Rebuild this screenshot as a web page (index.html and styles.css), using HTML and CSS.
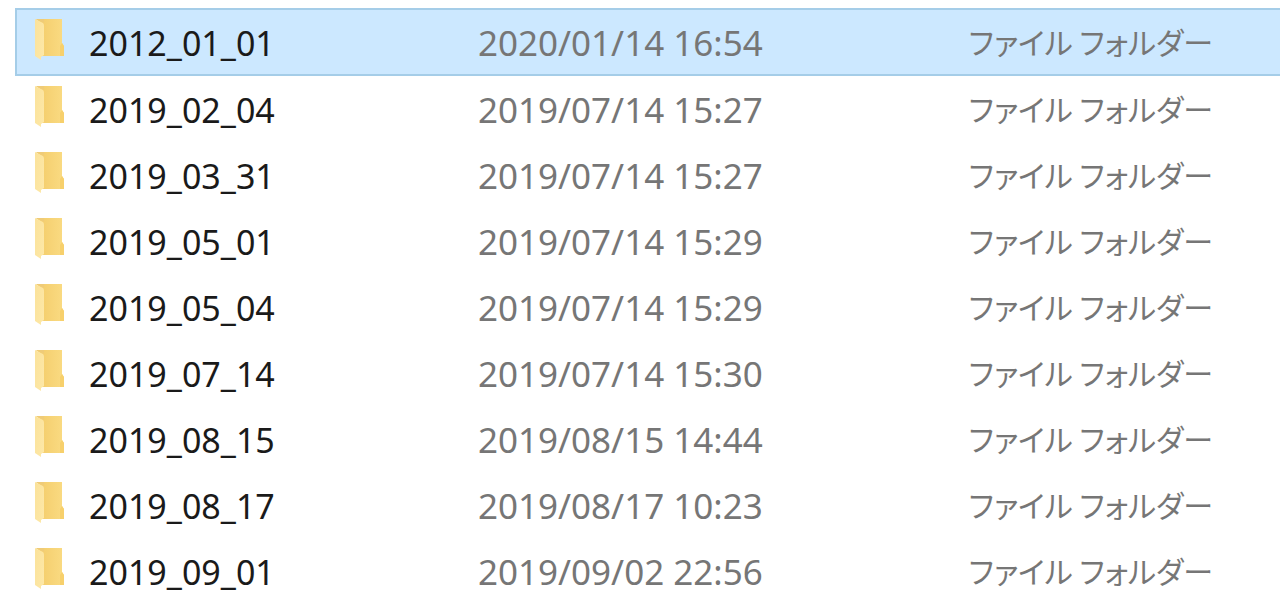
FILE: index.html
```
<!DOCTYPE html>
<html lang="ja">
<head>
    <meta charset="UTF-8">
    <meta name="viewport" content="width=device-width, initial-scale=1.0">
    <title>フォルダー一覧</title>
    <link rel="stylesheet" href="styles.css">
</head>
<body>
    <!-- フォルダーのアイコン -->
    <svg class="icon-defs" width="0" height="0" aria-hidden="true">
        <defs>
            <linearGradient id="back" x1="0" y1="0" x2="1" y2="0">
                <stop offset="0" stop-color="#f3cb68"/>
                <stop offset="1" stop-color="#fadb83"/>
            </linearGradient>
            <linearGradient id="flap" x1="0" y1="0" x2="1" y2="1">
                <stop offset="0" stop-color="#fbe29a"/>
                <stop offset="1" stop-color="#fde8a8"/>
            </linearGradient>
        </defs>
        <symbol id="folder" viewBox="0 0 30 42">
            <path d="M1 0H27V24L29 27V37H6V4Z" fill="url(#back)"/>
            <path d="M27 24L29 27V37H25V27Z" fill="#f7d06c"/>
            <path d="M0 0L8 4Q9 5 9 7V36L6 38V41L0 37Z" fill="url(#flap)"/>
            <path d="M1 0H9V4Z" fill="#efcb78"/>
        </symbol>
    </svg>

    <table class="file-list">
        <colgroup>
            <col class="col-name">
            <col class="col-date">
            <col class="col-type">
        </colgroup>
        <tbody>
            <tr class="selected">
                <td class="name"><div class="item"><svg class="icon" aria-hidden="true"><use href="#folder"/></svg>2012_01_01</div></td>
                <td class="date">2020/01/14 16:54</td>
                <td class="type">ファイル フォルダー</td>
            </tr>
            <tr>
                <td class="name"><div class="item"><svg class="icon" aria-hidden="true"><use href="#folder"/></svg>2019_02_04</div></td>
                <td class="date">2019/07/14 15:27</td>
                <td class="type">ファイル フォルダー</td>
            </tr>
            <tr>
                <td class="name"><div class="item"><svg class="icon" aria-hidden="true"><use href="#folder"/></svg>2019_03_31</div></td>
                <td class="date">2019/07/14 15:27</td>
                <td class="type">ファイル フォルダー</td>
            </tr>
            <tr>
                <td class="name"><div class="item"><svg class="icon" aria-hidden="true"><use href="#folder"/></svg>2019_05_01</div></td>
                <td class="date">2019/07/14 15:29</td>
                <td class="type">ファイル フォルダー</td>
            </tr>
            <tr>
                <td class="name"><div class="item"><svg class="icon" aria-hidden="true"><use href="#folder"/></svg>2019_05_04</div></td>
                <td class="date">2019/07/14 15:29</td>
                <td class="type">ファイル フォルダー</td>
            </tr>
            <tr>
                <td class="name"><div class="item"><svg class="icon" aria-hidden="true"><use href="#folder"/></svg>2019_07_14</div></td>
                <td class="date">2019/07/14 15:30</td>
                <td class="type">ファイル フォルダー</td>
            </tr>
            <tr>
                <td class="name"><div class="item"><svg class="icon" aria-hidden="true"><use href="#folder"/></svg>2019_08_15</div></td>
                <td class="date">2019/08/15 14:44</td>
                <td class="type">ファイル フォルダー</td>
            </tr>
            <tr>
                <td class="name"><div class="item"><svg class="icon" aria-hidden="true"><use href="#folder"/></svg>2019_08_17</div></td>
                <td class="date">2019/08/17 10:23</td>
                <td class="type">ファイル フォルダー</td>
            </tr>
            <tr>
                <td class="name"><div class="item"><svg class="icon" aria-hidden="true"><use href="#folder"/></svg>2019_09_01</div></td>
                <td class="date">2019/09/02 22:56</td>
                <td class="type">ファイル フォルダー</td>
            </tr>
        </tbody>
    </table>
</body>
</html>
```
FILE: styles.css
```
body {
    margin: 0;
    padding: 8px 0 0 15px;
    background-color: #fff;
    font-family: "Noto Sans", "Noto Sans CJK JP", sans-serif;
    font-size: 34px;
    line-height: 48px;
    color: #767676;
    overflow: hidden;
}

.icon-defs {
    position: absolute;
}

.file-list {
    width: 100%;
    table-layout: fixed;
    border-spacing: 0;
}

.col-name {
    width: 36.6%;
}

.col-date {
    width: 38.8%;
}

td {
    box-sizing: border-box;
    height: 66px;
    padding: 2px 0 0;
    white-space: nowrap;
}

.name {
    padding-left: 20px;
    color: #1a1a1a;
}

.item {
    display: flex;
    align-items: center;
    gap: 24px;
}

.icon {
    width: 30px;
    height: 42px;
    margin-bottom: 6px;
}

.date {
    font-size: 35px;
}

.type {
    padding: 0 0 2px;
    font-family: "Noto Sans CJK JP", sans-serif;
    font-size: 30px;
    font-feature-settings: "palt";
}

.selected td {
    height: 68px;
    background-color: #cce8ff;
    border-top: 2px solid #a5cde8;
    border-bottom: 2px solid #a5cde8;
}

.selected .name {
    padding-left: 18px;
    border-left: 2px solid #a5cde8;
}
```
